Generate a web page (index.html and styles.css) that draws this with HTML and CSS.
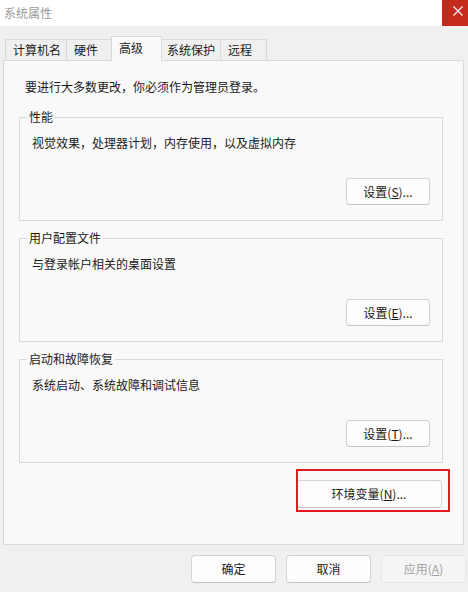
FILE: index.html
```html
<!DOCTYPE html>
<html lang="zh-CN">
<head>
  <meta charset="UTF-8">
  <title>系统属性</title>
  <link rel="stylesheet" href="styles.css">
</head>
<body>

  <div class="titlebar">
    <span class="title">系统属性</span>
    <div class="close">
      <svg width="10" height="10" viewBox="0 0 10 10">
        <path d="M0.5 0.5 L9.5 9.5 M9.5 0.5 L0.5 9.5" stroke="#fff" stroke-width="1.1" fill="none"/>
      </svg>
    </div>
  </div>

  <div class="tabs">
    <div class="tab">计算机名</div>
    <div class="tab">硬件</div>
    <div class="tab selected">高级</div>
    <div class="tab">系统保护</div>
    <div class="tab">远程</div>
  </div>

  <div class="panel">
    <p class="notice">要进行大多数更改，你必须作为管理员登录。</p>

    <fieldset class="group">
      <legend>性能</legend>
      <p class="desc">视觉效果，处理器计划，内存使用，以及虚拟内存</p>
      <div class="group-actions">
        <button class="btn">设置(<u>S</u>)...</button>
      </div>
    </fieldset>

    <fieldset class="group">
      <legend>用户配置文件</legend>
      <p class="desc">与登录帐户相关的桌面设置</p>
      <div class="group-actions">
        <button class="btn">设置(<u>E</u>)...</button>
      </div>
    </fieldset>

    <fieldset class="group">
      <legend>启动和故障恢复</legend>
      <p class="desc">系统启动、系统故障和调试信息</p>
      <div class="group-actions">
        <button class="btn">设置(<u>T</u>)...</button>
      </div>
    </fieldset>

    <div class="env-row">
      <div class="env-wrap">
        <button class="btn env">环境变量(<u>N</u>)...</button>
        <div class="highlight"></div>
      </div>
    </div>
  </div>

  <div class="footer">
    <button class="btn">确定</button>
    <button class="btn">取消</button>
    <button class="btn" disabled>应用(<u>A</u>)</button>
  </div>

</body>
</html>
```

FILE: styles.css
```css
* {
  box-sizing: border-box;
}

html, body {
  margin: 0;
  padding: 0;
  overflow: hidden;
}

body {
  font-family: "Noto Sans CJK SC", "Microsoft YaHei", sans-serif;
  font-size: 12px;
  line-height: 16px;
  color: #1a1a1a;
  background-color: #f0f0f0;
  width: 468px;
  height: 592px;
}

p {
  margin: 0;
}

.titlebar {
  height: 26px;
  background-color: #fff;
  display: flex;
  align-items: center;
  justify-content: space-between;
}

.title {
  padding-left: 4px;
  color: #9a9a9a;
}

.close {
  width: 26px;
  height: 26px;
  background-color: #c42b1c;
  display: flex;
  justify-content: flex-end;
  align-items: flex-start;
  padding: 6px 5px 0 0;
}

.close svg {
  display: block;
}

.tabs {
  display: flex;
  align-items: flex-end;
  margin-top: 10px;
  padding-left: 5px;
  height: 24px;
  position: relative;
  z-index: 1;
}

.tab {
  min-width: 47px;
  padding: 2px 5px 2px 7px;
  border: 1px solid #d9d9d9;
  border-bottom: none;
  background-color: #f0f0f0;
  white-space: nowrap;
  margin-left: -1px;
}

.tab:first-child {
  margin-left: 0;
}

.tab.selected {
  background-color: #f9f9f9;
  padding: 3px 5px 5px 7px;
  margin: 0 -2px -1px -2px;
  min-width: 51px;
  position: relative;
  z-index: 2;
}

.panel {
  margin-left: 3px;
  width: 461px;
  height: 485px;
  border: 1px solid #d9d9d9;
  background-color: #f9f9f9;
  padding: 18px 20px 0 15px;
}

.notice {
  margin-left: 6px;
}

.group {
  margin: 9px 0 0;
  padding: 10px 12px 15px 7px;
  border: 1px solid #dadada;
  min-width: 0;
}

.notice + .group {
  margin-top: 14px;
}

.group legend {
  padding: 0 2px;
  line-height: 16px;
}

.desc {
  margin-left: 5px;
}

.group-actions {
  display: flex;
  justify-content: flex-end;
  margin-top: 27px;
}

.btn {
  font-family: inherit;
  font-size: 12px;
  line-height: 16px;
  color: #1a1a1a;
  width: 84px;
  height: 27px;
  padding: 0;
  background-color: #fdfdfd;
  border: 1px solid #d3d3d3;
  border-bottom-color: #c4c4c4;
  border-radius: 4px;
}

.btn:disabled {
  background-color: #f5f5f5;
  border-color: #e6e6e6;
  color: #a3a3a3;
}

.env-row {
  display: flex;
  justify-content: flex-end;
  margin-top: 17px;
  padding-right: 1px;
}

.env-wrap {
  position: relative;
}

.btn.env {
  width: 146px;
  height: 28px;
  display: block;
}

.highlight {
  position: absolute;
  left: 0;
  top: -11px;
  width: 154px;
  height: 43px;
  border: 2px solid #e3191f;
  pointer-events: none;
}

.footer {
  display: flex;
  justify-content: flex-end;
  gap: 10px;
  margin-top: 10px;
  padding-right: 2px;
}

.footer .btn {
  width: 85px;
  height: 28px;
}
```
